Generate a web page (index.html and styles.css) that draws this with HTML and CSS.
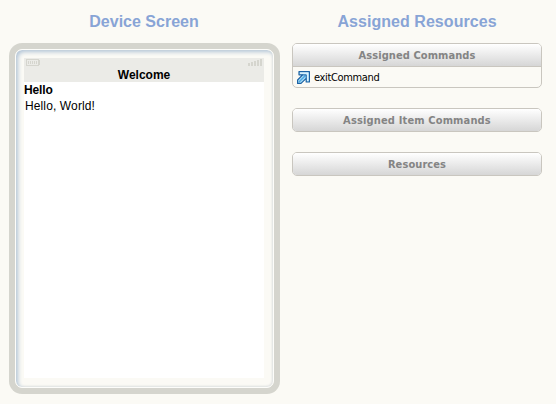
FILE: index.html
```html
<!DOCTYPE html>
<html lang="en">
<head>
<meta charset="utf-8">
<title>Screen Designer</title>
<link rel="stylesheet" href="styles.css">
</head>
<body>
<main class="designer">
  <section class="device-panel">
    <h2 class="title title-device">Device Screen</h2>
    <div class="device">
      <div class="bezel">
        <div class="screen">
          <header class="screen-header">
            <div class="status">
              <svg class="battery" width="14" height="7" viewBox="0 0 14 7" shape-rendering="crispEdges">
                <path fill="#d5d5ce" d="M0 0H13V1H14V6H13V7H0ZM1 1V6H12V1ZM2 2H3V5H2ZM4 2H5V5H4ZM6 2H7V5H6ZM8 2H9V5H8ZM10 2H11V5H10Z" fill-rule="evenodd"/>
              </svg>
              <svg class="signal" width="14" height="7" viewBox="0 0 14 7" shape-rendering="crispEdges">
                <path fill="#d5d5ce" d="M0 4H2V7H0ZM3 3H5V7H3ZM6 2H8V7H6ZM9 1H11V7H9ZM12 0H14V7H12Z"/>
              </svg>
            </div>
            <div class="screen-title">Welcome</div>
          </header>
          <div class="item-label">Hello</div>
          <div class="item-text">Hello, World!</div>
        </div>
      </div>
    </div>
  </section>
  <section class="resources-panel">
    <h2 class="title title-resources">Assigned Resources</h2>
    <div class="group">
      <h3 class="group-header">Assigned Commands</h3>
      <div class="command">
        <svg class="command-icon" width="13" height="13" viewBox="0 0 13 13">
          <path d="M2 .6H12.4V11H9.2V7.4L4 12.4H.6V9L5.6 3.8H2Z" fill="#a9dcf6" stroke="#1c62a4" stroke-width="1.2" stroke-linejoin="round"/>
          <path d="M3 2.2H10.8V10" fill="none" stroke="#e8f8ff" stroke-width="1.2"/>
          <path d="M2 11L8.4 4.6" fill="none" stroke="#4aa8e4" stroke-width="1.4"/>
          <path d="M5.6 3.9H9.2V7.4" fill="none" stroke="#1c62a4"/>
        </svg>
        <span class="command-name">exitCommand</span>
      </div>
    </div>
    <div class="group"><h3 class="group-header header-items">Assigned Item Commands</h3></div>
    <div class="group"><h3 class="group-header">Resources</h3></div>
  </section>
</main>
</body>
</html>
```
FILE: styles.css
```css
* { box-sizing: border-box; }
body {
  margin: 0;
  background: #fbfaf5;
  font-family: "Liberation Sans", Arial, sans-serif;
}
.designer {
  display: flex;
  gap: 12px;
  width: 556px;
  height: 404px;
  padding: 0 14px 0 9px;
  overflow: hidden;
}
.device-panel { width: 271px; }
.resources-panel { width: 250px; }
.title {
  height: 43px;
  margin: 0;
  padding-top: 12px;
  color: #88a4d6;
  font-size: 16px;
  line-height: 20px;
  text-align: center;
  white-space: nowrap;
}
.title-device { padding-right: 1px; }
.title-resources { letter-spacing: .05px; }
.device {
  height: 351px;
  padding: 6px;
  background: #d5d5ce;
  border-radius: 13px;
}
.bezel {
  height: 339px;
  padding: 8px;
  border: 1px solid #fdfdfa;
  border-radius: 7px;
  background: #fbfaf5;
  box-shadow: inset 2px 2px 4px #b2c4d6, inset -1px -1px 2px #e8e8e4;
}
.screen {
  width: 240px;
  height: 320px;
  background: #fff;
  color: #000;
  font-size: 12px;
}
.screen-header { height: 24px; background: #ebebe7; }
.status {
  display: flex;
  justify-content: space-between;
  height: 10px;
  padding: 1px 2px 0;
}
.screen-title {
  font-weight: bold;
  line-height: 14px;
  text-align: center;
}
.item-label { font-weight: bold; line-height: 16px; letter-spacing: -.15px; }
.item-text { padding-left: 1px; line-height: 16px; letter-spacing: .12px; }
.group {
  margin-bottom: 20px;
  border: 1px solid #c9c6bf;
  border-radius: 5px;
  overflow: hidden;
}
.group-header {
  height: 22px;
  margin: 0;
  padding-top: 1px;
  background: linear-gradient(#fff, #d6d6d6);
  color: #848484;
  font: bold 11px/22px "DejaVu Sans Condensed", "DejaVu Sans", sans-serif;
  letter-spacing: .08px;
  text-align: center;
}
.header-items { letter-spacing: .15px; }
.command {
  display: flex;
  align-items: center;
  gap: 4px;
  height: 21px;
  padding-left: 4px;
  border-top: 1px solid #c9c6bf;
}
.command-name {
  color: #000;
  font: 11px/20px "DejaVu Sans Condensed", "DejaVu Sans", sans-serif;
  letter-spacing: -.35px;
  padding-top: 1px;
}
```
